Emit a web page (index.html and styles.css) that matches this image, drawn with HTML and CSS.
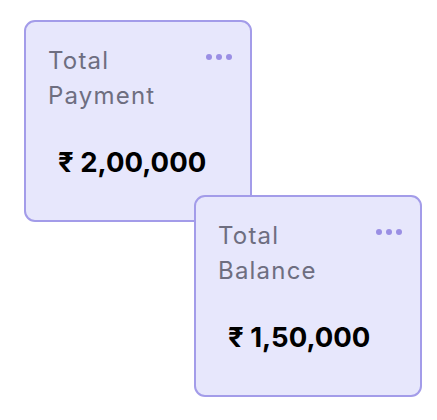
FILE: index.html
```html
<!DOCTYPE html>
<html lang="en">
<head>
<meta charset="utf-8">
<title>Cards</title>
<link rel="stylesheet" href="styles.css">
</head>
<body>
<div class="stack">
  <div class="card">
    <div class="card-head">
      <div class="title">Total<br>Payment</div>
      <div class="dots"><span></span><span></span><span></span></div>
    </div>
    <div class="amount">₹ 2,00,000</div>
  </div>
  <div class="card card-second">
    <div class="card-head">
      <div class="title">Total<br>Balance</div>
      <div class="dots"><span></span><span></span><span></span></div>
    </div>
    <div class="amount">₹ 1,50,000</div>
  </div>
</div>
</body>
</html>
```
FILE: styles.css
```css
html, body {
  margin: 0;
  padding: 0;
  background: #ffffff;
}
body {
  font-family: Inter, "Noto Sans", sans-serif;
}
.stack {
  display: flex;
  flex-direction: column;
  align-items: flex-start;
  padding: 20px 0 0 24px;
}
.card {
  box-sizing: border-box;
  width: 228px;
  height: 202px;
  background: #e7e7fc;
  border: 2px solid #a39ce9;
  border-radius: 11px;
  padding: 21px 18px 0 22px;
}
.card-second {
  margin-left: 170px;
  margin-top: -27px;
}
.card-head {
  display: flex;
  justify-content: space-between;
  align-items: flex-start;
}
.title {
  font-size: 24px;
  line-height: 35px;
  letter-spacing: 1.2px;
  color: #6e6e80;
}
.dots {
  display: flex;
  gap: 4px;
  margin-top: 11px;
}
.dots span {
  width: 6px;
  height: 6px;
  border-radius: 50%;
  background: #9a8fe4;
}
.amount {
  margin: 32px 0 0 10px;
  font-size: 27.5px;
  line-height: 34px;
  font-weight: 700;
  color: #000;
}
```
